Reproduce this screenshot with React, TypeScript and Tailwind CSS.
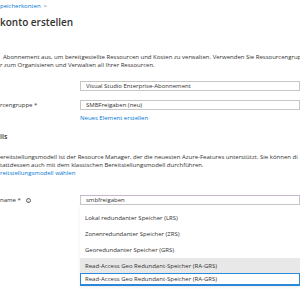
export default function App() {
  const items = [
    "Lokal redundanter Speicher (LRS)",
    "Zonenredundanter Speicher (ZRS)",
    "Georedundanter Speicher (GRS)",
  ];

  return (
    <div className="w-[300px] h-[300px] overflow-hidden bg-white text-[#323130] font-['Open_Sans',sans-serif] text-[6px] leading-[8px] whitespace-nowrap">
      <div className="pt-[2px]">
        <span className="text-[#0078d4]">peicherkonten</span>
        <span className="ml-[3px] text-[#605e5c]">&gt;</span>
      </div>
      <h1 className="mt-[5px] text-[10px] leading-[14px] font-semibold">konto erstellen</h1>

      <div className="mt-[24px] pl-[3px]">
        <div>Abonnement aus, um bereitgestellte Ressourcen und Kosten zu verwalten. Verwenden Sie Ressourcengrup</div>
        <div className="-ml-[3px]">r zum Organisieren und Verwalten all Ihrer Ressourcen.</div>
      </div>

      <div className="mt-[12px] flex items-center">
        <div className="w-[80px]" />
        <div className="flex-1 h-[10px] border border-[#c8c6c4] pl-[5px] flex items-center">
          Visual Studio Enterprise-Abonnement
        </div>
      </div>

      <div className="mt-[9px] flex items-center">
        <div className="w-[80px]">rcengruppe *</div>
        <div className="flex-1 h-[10px] border border-[#c8c6c4] pl-[5px] flex items-center">
          SMBFreigaben (neu)
        </div>
      </div>
      <div className="mt-[4px] pl-[80px] text-[#0078d4]">Neues Element erstellen</div>

      <div className="mt-[10px] text-[7px] leading-[10px] font-semibold">ils</div>

      <div className="mt-[11px]">
        <div>ereitstellungsmodell ist der Resource Manager, der die neuesten Azure-Features unterstützt. Sie können di</div>
        <div>tattdessen auch mit dem klassischen Bereitstellungsmodell durchführen.</div>
        <div className="text-[#0078d4]">reitstellungsmodell wählen</div>
      </div>

      <div className="mt-[18px] flex items-center">
        <div className="w-[80px] flex items-center gap-[3px]">
          <span>name *</span>
          <span className="ml-[2px] w-[5px] h-[5px] rounded-full border border-[#605e5c] text-[3.5px] leading-[3px] flex items-center justify-center">i</span>
        </div>
        <div className="flex-1 h-[10px] border border-[#c8c6c4] border-t-[#c4b6cc] pl-[5px] flex items-center">
          smbfreigaben
        </div>
      </div>

      <div className="ml-[80px] pt-[5px] bg-white shadow-[0_1px_3px_rgba(0,0,0,0.08)]">
        {items.map((t) => (
          <div key={t} className="h-[16px] pl-[5px] flex items-center">
            {t}
          </div>
        ))}
        <div className="h-[15px] pl-[5px] flex items-center bg-[#e8e8e8]">
          Read-Access Geo Redundant-Speicher (RA-GRS)
        </div>
        <div className="h-[13px] pl-[4px] flex items-center border border-b-2 border-[#2b88d8]">
          Read-Access Geo Redundant-Speicher (RA-GRS)
        </div>
      </div>
    </div>
  );
}
